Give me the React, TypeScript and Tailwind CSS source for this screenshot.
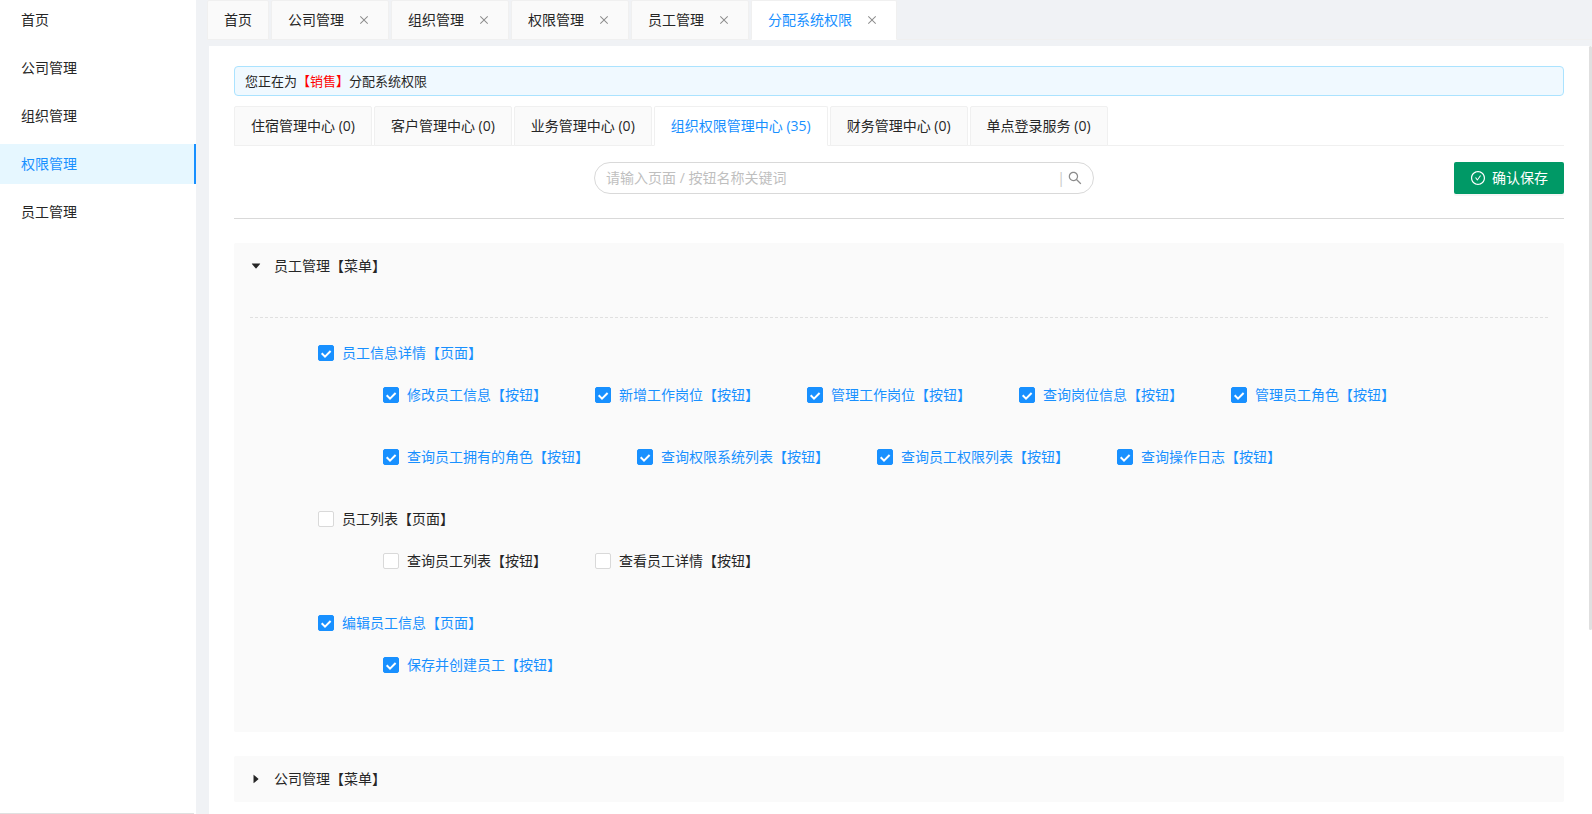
import { useState } from "react";
import {
  AiFillCaretDown,
  AiFillCaretRight,
  AiOutlineCheckCircle,
  AiOutlineClose,
  AiOutlineSearch,
} from "react-icons/ai";
import clsx from "clsx";

interface Permission {
  name: string;
  checked: boolean;
}

interface PermissionPage extends Permission {
  buttons: Permission[];
}

interface PermissionMenu {
  name: string;
  pages: PermissionPage[];
}

const sideMenus = ["首页", "公司管理", "组织管理", "权限管理", "员工管理"];

const pageTabs = [
  { name: "首页", closable: false },
  { name: "公司管理", closable: true },
  { name: "组织管理", closable: true },
  { name: "权限管理", closable: true },
  { name: "员工管理", closable: true },
  { name: "分配系统权限", closable: true },
];

const systems = [
  { name: "住宿管理中心", count: 0 },
  { name: "客户管理中心", count: 0 },
  { name: "业务管理中心", count: 0 },
  { name: "组织权限管理中心", count: 35 },
  { name: "财务管理中心", count: 0 },
  { name: "单点登录服务", count: 0 },
];

const menus: PermissionMenu[] = [
  {
    name: "员工管理",
    pages: [
      {
        name: "员工信息详情",
        checked: true,
        buttons: [
          { name: "修改员工信息", checked: true },
          { name: "新增工作岗位", checked: true },
          { name: "管理工作岗位", checked: true },
          { name: "查询岗位信息", checked: true },
          { name: "管理员工角色", checked: true },
          { name: "查询员工拥有的角色", checked: true },
          { name: "查询权限系统列表", checked: true },
          { name: "查询员工权限列表", checked: true },
          { name: "查询操作日志", checked: true },
        ],
      },
      {
        name: "员工列表",
        checked: false,
        buttons: [
          { name: "查询员工列表", checked: false },
          { name: "查看员工详情", checked: false },
        ],
      },
      {
        name: "编辑员工信息",
        checked: true,
        buttons: [{ name: "保存并创建员工", checked: true }],
      },
    ],
  },
  { name: "公司管理", pages: [] },
];

const Sidebar = () => {
  const [active, setActive] = useState("权限管理");

  return (
    <nav className="flex w-[196px] shrink-0 flex-col justify-between bg-white">
      <ul className="flex flex-col gap-2">
        {sideMenus.map((name) => (
          <li key={name}>
            <a
              href="#"
              onClick={() => setActive(name)}
              className={clsx(
                "block h-10 border-r-2 pl-[21px] leading-10",
                active === name
                  ? "border-[#1890ff] bg-[#e6f7ff] text-[#1890ff]"
                  : "border-transparent"
              )}
            >
              {name}
            </a>
          </li>
        ))}
      </ul>
      <div className="mr-0.5 h-px bg-[#e0e0e0]" />
    </nav>
  );
};

const PageTabs = () => {
  const [active, setActive] = useState("分配系统权限");

  return (
    <div className="-ml-0.5 flex h-10 gap-0.5 border-b border-[#f0f0f0]">
      {pageTabs.map(({ name, closable }) => (
        <div
          key={name}
          className={clsx(
            "flex h-10 items-center rounded-t-xs border border-[#f0f0f0]",
            closable ? "pr-[18px] pl-4" : "px-4",
            active === name ? "border-b-white bg-white text-[#1890ff]" : "bg-[#fafafa]"
          )}
        >
          <button type="button" onClick={() => setActive(name)}>
            {name}
          </button>
          {closable && (
            <button type="button" aria-label="关闭" className="ml-3.5 text-[#8c8c8c]">
              <AiOutlineClose size={12} />
            </button>
          )}
        </div>
      ))}
    </div>
  );
};

const SystemTabs = () => {
  const [active, setActive] = useState("组织权限管理中心");

  return (
    <div className="mt-2.5 flex h-10 gap-0.5 border-b border-[#f0f0f0]">
      {systems.map(({ name, count }) => (
        <button
          key={name}
          type="button"
          onClick={() => setActive(name)}
          className={clsx(
            "h-10 rounded-t-xs border border-[#f0f0f0] px-4",
            active === name ? "border-b-white bg-white text-[#1890ff]" : "bg-[#fafafa]"
          )}
        >
          {name} ({count})
        </button>
      ))}
    </div>
  );
};

const PermissionCheckbox = ({ label, checked }: { label: string; checked: boolean }) => (
  <label className="flex cursor-pointer items-center">
    <span className="grid size-4">
      <input
        type="checkbox"
        defaultChecked={checked}
        className="peer col-start-1 row-start-1 size-4 appearance-none rounded-xs border border-[#d9d9d9] bg-white checked:border-[#1890ff] checked:bg-[#1890ff]"
      />
      <svg
        viewBox="0 0 16 16"
        fill="none"
        stroke="#fff"
        strokeWidth="2"
        className="pointer-events-none invisible col-start-1 row-start-1 size-4 peer-checked:visible"
      >
        <path d="M3.7 8.3 7 11.6 12.6 6" />
      </svg>
    </span>
    <span className={clsx("pl-2", checked && "text-[#1890ff]")}>{label}</span>
  </label>
);

const MenuPanel = ({ menu, defaultOpen }: { menu: PermissionMenu; defaultOpen: boolean }) => {
  const [open, setOpen] = useState(defaultOpen);

  return (
    <section className="mt-6 rounded-xs bg-[#fafafa]">
      <button
        type="button"
        onClick={() => setOpen(!open)}
        className="flex w-full items-center gap-3 px-4 py-3"
      >
        {open ? <AiFillCaretDown size={12} /> : <AiFillCaretRight size={12} />}
        {menu.name}【菜单】
      </button>
      {open && (
        <div className="px-4 pt-7 pb-4">
          <hr className="mb-6 border-dashed border-[#e0e0e0]" />
          {menu.pages.map((page) => (
            <div key={page.name} className="flex flex-col items-start gap-5 pl-[68px]">
              <PermissionCheckbox label={`${page.name}【页面】`} checked={page.checked} />
              <div className="flex flex-wrap gap-x-12 gap-y-10 pb-10 pl-[65px]">
                {page.buttons.map((btn) => (
                  <PermissionCheckbox
                    key={btn.name}
                    label={`${btn.name}【按钮】`}
                    checked={btn.checked}
                  />
                ))}
              </div>
            </div>
          ))}
        </div>
      )}
    </section>
  );
};

const App = () => {
  return (
    <div
      lang="zh-CN"
      className="flex h-screen overflow-hidden bg-[#f0f2f5] font-['Open_Sans','Noto_Sans_CJK_SC',sans-serif] text-sm leading-[22px] text-[#262626]"
    >
      <Sidebar />
      <div className="ml-[13px] flex min-w-0 flex-1 flex-col">
        <PageTabs />
        <main className="relative mt-1.5 min-h-0 flex-1 overflow-hidden bg-white pt-5 pr-7 pl-[25px]">
          <div className="rounded-sm border border-[#abe3ff] bg-[#f0f9ff] px-2.5 py-[3px] text-[13px]">
            您正在为<span className="text-[#ff0000]">【销售】</span>分配系统权限
          </div>

          <SystemTabs />

          <div className="mt-4 flex items-center border-b border-[#d9d9d9] pb-6">
            <div className="flex flex-1 justify-center">
              <div className="flex h-8 w-[500px] items-center rounded-full border border-[#d9d9d9] pr-2.5 pl-[11px]">
                <input
                  type="text"
                  aria-label="关键词"
                  placeholder="请输入页面 / 按钮名称关键词"
                  className="min-w-0 flex-1 outline-none placeholder:text-[#bfbfbf]"
                />
                <span className="text-[#c8c8c8]">|</span>
                <button type="button" aria-label="搜索" className="ml-0.5 text-[#8c8c8c]">
                  <AiOutlineSearch size={16} />
                </button>
              </div>
            </div>
            <button
              type="button"
              className="flex h-8 items-center gap-1.5 rounded-xs bg-[#009966] px-4 text-white shadow-[0_2px_0_rgba(0,0,0,0.04)]"
            >
              <AiOutlineCheckCircle size={16} />
              确认保存
            </button>
          </div>

          {menus.map((menu, index) => (
            <MenuPanel key={menu.name} menu={menu} defaultOpen={index === 0} />
          ))}

          {/* Scroll position indicator */}
          <div className="absolute top-0 right-0 h-[76%] w-[3px] rounded-full bg-[#e0e0e0]" />
        </main>
      </div>
    </div>
  );
};

export default App;
